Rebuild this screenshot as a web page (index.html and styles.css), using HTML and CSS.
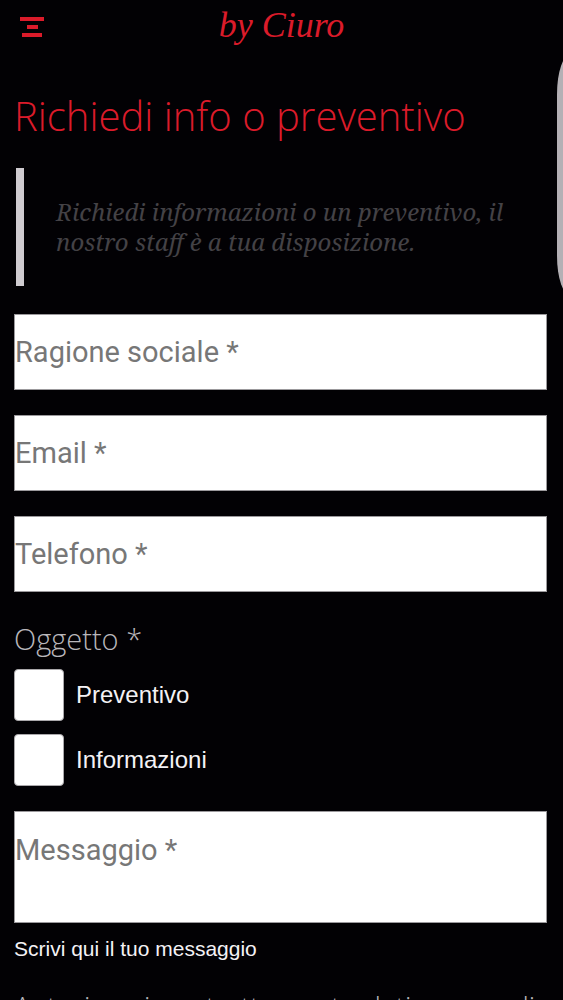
FILE: index.html
```html
<!DOCTYPE html>
<html lang="it">
<head>
<meta charset="utf-8">
<meta name="viewport" content="width=device-width, initial-scale=1">
<title>Richiedi info o preventivo</title>
<link rel="stylesheet" href="styles.css">
</head>
<body>
<header class="topbar">
  <button class="menu" type="button" aria-label="Menu">
    <svg width="24" height="20" viewBox="0 0 24 20" aria-hidden="true"><path d="M0 0h24v4H0zM7 8h11v4H7zM2 16h20v4H2z" fill="#db1b2a"/></svg>
  </button>
  <a class="brand" href="#">by Ciuro</a>
</header>
<div class="edge-handle"></div>
<main class="content">
  <h1 class="title">Richiedi info o preventivo</h1>
  <blockquote class="intro">Richiedi informazioni o un preventivo, il nostro staff è a tua disposizione.</blockquote>
  <form class="form">
    <input class="field" type="text" placeholder="Ragione sociale *" aria-label="Ragione sociale">
    <input class="field" type="email" placeholder="Email *" aria-label="Email">
    <input class="field" type="tel" placeholder="Telefono *" aria-label="Telefono">
    <fieldset class="subject">
      <legend class="legend">Oggetto *</legend>
      <div class="options">
        <label class="option"><input class="check" type="checkbox">Preventivo</label>
        <label class="option"><input class="check" type="checkbox">Informazioni</label>
      </div>
    </fieldset>
    <div class="message">
      <textarea class="field area" id="message" placeholder="Messaggio *"></textarea>
      <label class="hint" for="message">Scrivi qui il tuo messaggio</label>
    </div>
    <p class="consent">Autorizzazione trattamento dati personali</p>
  </form>
</main>
</body>
</html>
```
FILE: styles.css
```css
* { box-sizing: border-box; }
html { scrollbar-width: none; background: #020104; }
body { margin: 0; background: #020104; color: #f4f2f5; font-family: "Liberation Sans", Arial, sans-serif; overflow-x: hidden; }
.topbar { display: grid; grid-template-columns: 1fr auto 1fr; align-items: center; height: 54px; padding: 0 20px; }
.menu { justify-self: start; display: flex; padding: 0; border: 0; background: none; }
.brand { padding-bottom: 4px; color: #db1b2a; font: italic 36px/48px "Z003", "URW Chancery L", "Liberation Serif", serif; text-decoration: none; }
.edge-handle { position: absolute; top: 54px; right: -22px; width: 28px; height: 242px; border-radius: 14px / 40px; background: #b4b0b5; }
.content { padding: 32px 16px 0 14px; }
.title { margin: 0; color: #db1b2a; font: 300 40px/60px "Open Sans", sans-serif; }
.intro { margin: 22px 0 28px 2px; padding: 29px 32px; border-left: 8px solid #cfcbd0; color: #444246; font: italic 24px/30px "Noto Serif", "Droid Serif", "Liberation Serif", serif; }
.form { display: flex; flex-direction: column; gap: 25px; }
.field { display: block; width: 100%; height: 76px; margin: 0; padding: 0; border: 1px solid #9b999c; border-radius: 0; background: #fff; color: #333; font: 29px/36px Roboto, sans-serif; }
.field::placeholder { color: #777; opacity: 1; }
.subject { margin: 0; padding: 0; border: 0; min-width: 0; }
.legend { padding: 0; color: #b9b7bb; font: 300 29px/44px "Open Sans", sans-serif; }
.options { display: flex; flex-direction: column; gap: 13px; padding-top: 8px; }
.option { display: flex; align-items: center; gap: 12px; font-size: 24px; }
.check { appearance: none; width: 50px; height: 52px; margin: 0; border: 1px solid #aaa8ab; border-radius: 4px; background: #fff; }
.check:checked { background: #db1b2a; }
.area { height: 112px; padding-top: 20px; resize: none; }
.hint { display: block; margin-top: 12px; font-size: 21px; line-height: 28px; }
.consent { margin: 0; color: #b9b7bb; font: 300 28px/36px "Open Sans", sans-serif; }
```
